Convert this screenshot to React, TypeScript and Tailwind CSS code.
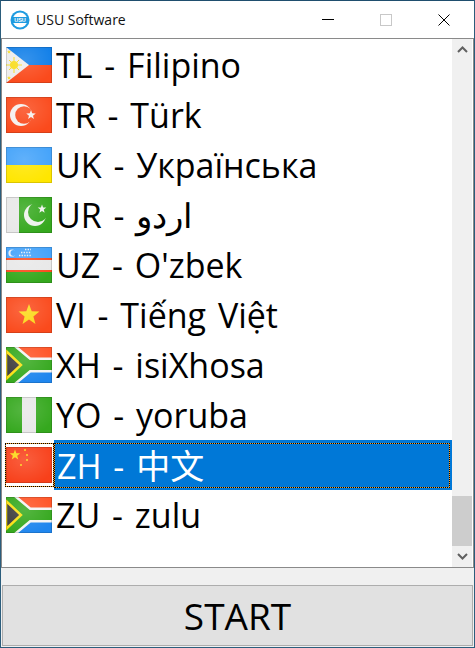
const font = { fontFamily: '"Open Sans", "Noto Sans CJK SC", sans-serif' };

function Star({ cx, cy, r, fill }: { cx: number; cy: number; r: number; fill: string }) {
  const pts = Array.from({ length: 10 }, (_, i) => {
    const a = -Math.PI / 2 + (i * Math.PI) / 5;
    const d = i % 2 ? r * 0.42 : r;
    return `${cx + d * Math.cos(a)},${cy + d * Math.sin(a)}`;
  }).join(" ");
  return <polygon points={pts} fill={fill} />;
}

function SouthAfrica() {
  return (
    <>
      <rect width="46" height="18" fill="#ff5426" />
      <rect y="18" width="46" height="18" fill="#1f86ee" />
      <path d="M-2 -2 L22 18 L48 18 M-2 38 L22 18" stroke="#f4f4f4" strokeWidth="15" fill="none" />
      <path d="M-2 -2 L22 18 L48 18 M-2 38 L22 18" stroke="#35a81e" strokeWidth="10" fill="none" />
      <path d="M0 4 L15 18 L0 32 Z" fill="#3a3a3a" stroke="#fbe010" strokeWidth="2.4" />
    </>
  );
}

function Flag({ code }: { code: string }) {
  let body = null;
  if (code === "TL")
    body = (
      <>
        <rect width="46" height="18" fill="#0f7ee8" />
        <rect y="18" width="46" height="18" fill="#fa4a1c" />
        <path d="M0 0 L23 18 L0 36 Z" fill="#ececec" />
        <circle cx="8" cy="18" r="4" fill="#f8dc1c" />
        <path d="M8 10 V26 M0 18 H16 M3 13 L13 23 M3 23 L13 13" stroke="#f8dc1c" strokeWidth="1" />
        <Star cx={3} cy={5} r={2} fill="#f8dc1c" />
        <Star cx={3} cy={31} r={2} fill="#f8dc1c" />
      </>
    );
  if (code === "TR")
    body = (
      <>
        <rect width="46" height="36" fill="#fa4a1c" />
        <circle cx="15" cy="18" r="11" fill="#f5f0ee" />
        <circle cx="18" cy="18" r="8.8" fill="#fa4a1c" />
        <Star cx={25} cy={18} r={5} fill="#f5f0ee" />
      </>
    );
  if (code === "UK")
    body = (
      <>
        <rect width="46" height="18" fill="#42a2fa" />
        <rect y="18" width="46" height="18" fill="#ffe600" />
      </>
    );
  if (code === "UR")
    body = (
      <>
        <rect width="46" height="36" fill="#35a81e" />
        <rect width="13" height="36" fill="#e8e8e8" />
        <circle cx="29" cy="18" r="11" fill="#eef2ec" />
        <circle cx="32" cy="15" r="10" fill="#35a81e" />
        <Star cx={36} cy={12} r={4.5} fill="#eef2ec" />
      </>
    );
  if (code === "UZ")
    body = (
      <>
        <rect width="46" height="11" fill="#42a2fa" />
        <rect y="11" width="46" height="2" fill="#fa4a1c" />
        <rect y="13" width="46" height="10" fill="#e8e8e8" />
        <rect y="23" width="46" height="2" fill="#fa4a1c" />
        <rect y="25" width="46" height="11" fill="#35a81e" />
        <circle cx="6" cy="6" r="3.6" fill="#e8eef5" />
        <circle cx="7.5" cy="6" r="3" fill="#42a2fa" />
        <path d="M13 8.5 H25 M15 5.5 H25 M19 2.5 H25" stroke="#e8eef5" strokeWidth="1.4" strokeDasharray="1.4 1.2" />
      </>
    );
  if (code === "VI")
    body = (
      <>
        <rect width="46" height="36" fill="#fa4a1c" />
        <Star cx={23} cy={18} r={11} fill="#fbd916" />
      </>
    );
  if (code === "XH" || code === "ZU") body = <SouthAfrica />;
  if (code === "YO")
    body = (
      <>
        <rect width="46" height="36" fill="#35a81e" />
        <rect x="16" width="14" height="36" fill="#e8e8e8" />
      </>
    );
  if (code === "ZH")
    body = (
      <>
        <rect width="46" height="36" fill="#f8401a" />
        <Star cx={9} cy={8} r={5.5} fill="#fbd916" />
        <circle cx="19" cy="3" r="1" fill="#fbd916" />
        <circle cx="21" cy="8" r="1" fill="#fbd916" />
        <circle cx="21" cy="13" r="1" fill="#fbd916" />
        <circle cx="15" cy="18" r="1" fill="#fbd916" />
      </>
    );
  return (
    <svg width="46" height="36" viewBox="0 0 46 36" className="block shrink-0">
      <defs>
        <radialGradient id="shine" cx="0.4" cy="0.35" r="0.7">
          <stop offset="0" stopColor="#fff" stopOpacity="0.16" />
          <stop offset="1" stopColor="#fff" stopOpacity="0" />
        </radialGradient>
      </defs>
      {body}
      <rect width="46" height="36" fill="url(#shine)" />
      <rect x="0.5" y="0.5" width="45" height="35" fill="none" stroke="#000" strokeOpacity="0.14" />
    </svg>
  );
}

const rows = [
  { code: "TL", label: "TL - Filipino" },
  { code: "TR", label: "TR - Türk" },
  { code: "UK", label: "UK - Українська" },
  { code: "UR", label: "UR - اردو" },
  { code: "UZ", label: "UZ - O'zbek" },
  { code: "VI", label: "VI - Tiếng Việt" },
  { code: "XH", label: "XH - isiXhosa" },
  { code: "YO", label: "YO - yoruba" },
  { code: "ZH", label: "ZH - 中文", selected: true },
  { code: "ZU", label: "ZU - zulu" },
];

export default function App() {
  return (
    <div className="flex h-[648px] w-[475px] flex-col overflow-hidden border border-[#2b5d7c] border-t-[#1f4e6e] bg-[#f0f0f0]" style={font}>
      <div className="flex h-[38px] shrink-0 items-center border-b border-[#8a8a8a] bg-white pl-[9px]">
        <svg width="20" height="20" viewBox="0 0 20 20" className="shrink-0">
          <circle cx="10" cy="10" r="9.5" fill="#1e9be0" />
          <circle cx="10" cy="10" r="7.4" fill="#fff" />
          <rect x="1.5" y="7" width="17" height="6" rx="1" fill="#1e9be0" />
          <text x="10" y="12.2" textAnchor="middle" fontSize="5.5" fontWeight="700" fill="#fff" fontFamily="Liberation Sans">USU</text>
        </svg>
        <span className="ml-[6px] text-[14px] text-[#111]">USU Software</span>
        <div className="mr-px ml-auto flex items-center">
          <div className="flex h-[36px] w-[58px] items-center justify-center">
            <div className="h-px w-[12px] bg-black" />
          </div>
          <div className="flex h-[36px] w-[58px] items-center justify-center">
            <div className="h-[12px] w-[12px] border border-[#c8c8c8]" />
          </div>
          <div className="flex h-[36px] w-[58px] items-center justify-center">
            <svg width="12" height="12" viewBox="0 0 12 12">
              <path d="M0.5 0.5 L11.5 11.5 M11.5 0.5 L0.5 11.5" stroke="#000" strokeWidth="1" />
            </svg>
          </div>
        </div>
      </div>

      <div className="flex h-[529px] shrink-0 border-x border-b border-[#8a8a8a] bg-white">
        <div className="flex-1 pt-px">
          {rows.map((r) => (
            <div key={r.code} className="flex h-[50px] items-center">
              {r.selected ? (
                <div className="ml-[3px] h-[44px] w-[49px] border border-dotted border-black bg-[#f0a030]">
                  <div className="flex h-full items-center bg-white">
                    <Flag code={r.code} />
                  </div>
                </div>
              ) : (
                <div className="ml-[4px] w-[48px]">
                  <Flag code={r.code} />
                </div>
              )}
              {r.selected ? (
                <div className="h-[50px] flex-1 bg-[#0078d7] pt-[3px] pr-[2px] pb-[2px]">
                  <div className="h-full border border-dotted border-black bg-[#f0a030]">
                    <div className="flex h-full items-center bg-[#0078d7] pl-[2px] text-[34px] [word-spacing:3px] text-white">
                      <span className="leading-none whitespace-nowrap">{r.label}</span>
                    </div>
                  </div>
                </div>
              ) : (
                <div className="pl-[2px] text-[34px] [word-spacing:3px] text-black">
                  <span className="leading-none whitespace-nowrap">{r.label}</span>
                </div>
              )}
            </div>
          ))}
        </div>
        <div className="mr-px flex w-[20px] shrink-0 flex-col bg-[#f0f0f0]">
          <div className="flex h-[21px] items-center justify-center">
            <svg width="11" height="7" viewBox="0 0 11 7">
              <path d="M1 6 L5.5 1.5 L10 6" stroke="#606060" strokeWidth="2" fill="none" />
            </svg>
          </div>
          <div className="flex-1" />
          <div className="h-[50px] bg-[#cdcdcd]" />
          <div className="flex h-[21px] items-center justify-center">
            <svg width="11" height="7" viewBox="0 0 11 7">
              <path d="M1 1 L5.5 5.5 L10 1" stroke="#606060" strokeWidth="2" fill="none" />
            </svg>
          </div>
        </div>
      </div>

      <div className="flex flex-1 flex-col px-px pb-px pt-[17px]">
        <button className="flex h-[61px] items-center justify-center border border-[#adadad] bg-[#e1e1e1] text-[37px] text-black">
          START
        </button>
      </div>
    </div>
  );
}
